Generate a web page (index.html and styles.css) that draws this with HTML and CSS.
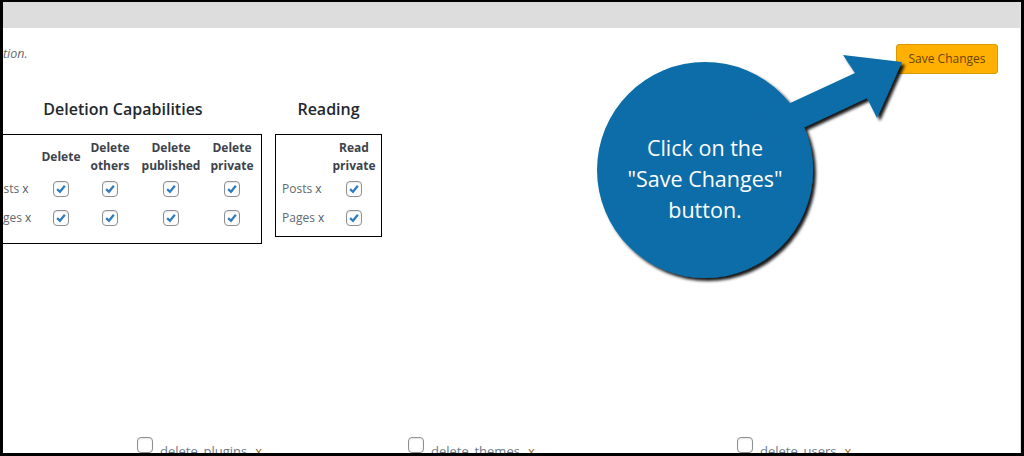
FILE: index.html
```html
<!DOCTYPE html>
<html>
<head>
<meta charset="utf-8">
<link rel="stylesheet" href="styles.css">
</head>
<body>
<div class="frame">
  <div class="inner">
    <div class="topbar"></div>
    <div class="head">
      <p class="desc">tion.</p>
      <button class="save">Save Changes</button>
    </div>
    <div class="groups">
      <section class="group group-del">
        <h2>Deletion Capabilities</h2>
        <div class="box box-del">
          <div class="hdr"></div>
          <div class="hdr">Delete</div>
          <div class="hdr">Delete<br>others</div>
          <div class="hdr">Delete<br>published</div>
          <div class="hdr">Delete<br>private</div>

          <div class="lbl">Posts <span class="x">x</span></div>
          <div class="cell"><span class="cb on"><svg viewBox="0 0 16 16"><polyline points="3.6,8.2 6.8,11.2 12.4,4.2"/></svg></span></div>
          <div class="cell"><span class="cb on"><svg viewBox="0 0 16 16"><polyline points="3.6,8.2 6.8,11.2 12.4,4.2"/></svg></span></div>
          <div class="cell"><span class="cb on"><svg viewBox="0 0 16 16"><polyline points="3.6,8.2 6.8,11.2 12.4,4.2"/></svg></span></div>
          <div class="cell"><span class="cb on"><svg viewBox="0 0 16 16"><polyline points="3.6,8.2 6.8,11.2 12.4,4.2"/></svg></span></div>

          <div class="lbl">Pages <span class="x">x</span></div>
          <div class="cell"><span class="cb on"><svg viewBox="0 0 16 16"><polyline points="3.6,8.2 6.8,11.2 12.4,4.2"/></svg></span></div>
          <div class="cell"><span class="cb on"><svg viewBox="0 0 16 16"><polyline points="3.6,8.2 6.8,11.2 12.4,4.2"/></svg></span></div>
          <div class="cell"><span class="cb on"><svg viewBox="0 0 16 16"><polyline points="3.6,8.2 6.8,11.2 12.4,4.2"/></svg></span></div>
          <div class="cell"><span class="cb on"><svg viewBox="0 0 16 16"><polyline points="3.6,8.2 6.8,11.2 12.4,4.2"/></svg></span></div>
        </div>
      </section>
      <section class="group group-read">
        <h2>Reading</h2>
        <div class="box box-read">
          <div class="hdr"></div>
          <div class="hdr">Read<br>private</div>
          <div class="lbl">Posts <span class="x">x</span></div>
          <div class="cell"><span class="cb on"><svg viewBox="0 0 16 16"><polyline points="3.6,8.2 6.8,11.2 12.4,4.2"/></svg></span></div>
          <div class="lbl">Pages <span class="x">x</span></div>
          <div class="cell"><span class="cb on"><svg viewBox="0 0 16 16"><polyline points="3.6,8.2 6.8,11.2 12.4,4.2"/></svg></span></div>
        </div>
      </section>
    </div>
    <div class="bottom">
      <label class="opt"><span class="cb"></span><span class="cap">delete_plugins</span><span class="xo">x</span></label>
      <label class="opt"><span class="cb"></span><span class="cap">delete_themes</span><span class="xo">x</span></label>
      <label class="opt"><span class="cb"></span><span class="cap">delete_users</span><span class="xo">x</span></label>
    </div>
  </div>

  <svg class="callout" width="330" height="260" viewBox="0 0 330 260">
    <defs>
      <filter id="sh" x="-20%" y="-20%" width="140%" height="140%">
        <feDropShadow dx="3" dy="3" stdDeviation="1.6" flood-color="#000" flood-opacity="0.9"/>
      </filter>
    </defs>
    <g filter="url(#sh)" fill="#086da9">
      <circle cx="115" cy="130" r="108"/>
      <polygon points="170,77 265,33 253,15 312,22 287,78 277,58 183,102"/>
    </g>
  </svg>
  <div class="callout-text">Click on the<br>"Save Changes"<br>button.</div>
</div>
</body>
</html>
```

FILE: styles.css
```css
* { box-sizing: border-box; }
html, body { margin: 0; padding: 0; background: #fff; }
body { font-family: "Open Sans", "Noto Sans", sans-serif; color: #3c434a; }

.frame {
  position: relative;
  width: 1024px;
  height: 456px;
  border: solid #000;
  border-width: 2px 3px 3px 3px;
  overflow: hidden;
  background: #fff;
}
.inner {
  height: 100%;
  border-right: 1px solid #e3e3e3;
  display: flex;
  flex-direction: column;
  overflow: hidden;
}
.topbar { height: 26px; background: #dddddd; flex-shrink: 0; }

.head {
  display: flex;
  justify-content: space-between;
  align-items: flex-start;
  padding: 16px 22px 0 0;
  flex-shrink: 0;
}
.desc {
  margin: 1px 0 0;
  font-size: 12.5px;
  line-height: 17px;
  font-style: italic;
  color: #646970;
}
.save {
  height: 30px;
  width: 102px;
  padding: 0;
  border: 1px solid #d99a00;
  border-radius: 3px;
  background: #ffb000;
  color: #6b4200;
  font-family: "Open Sans", sans-serif;
  font-size: 12px;
  line-height: 28px;
}

.groups {
  display: flex;
  align-items: flex-start;
  gap: 13px;
  margin-top: 24px;
  flex-shrink: 0;
}
.group { display: flex; flex-direction: column; align-items: center; }
.group-del { margin-left: -19px; }
.group h2 {
  margin: 0 0 14px;
  font-size: 16px;
  line-height: 22px;
  font-weight: 600;
  color: #23282d;
}

.box {
  border: 1px solid #000;
  display: grid;
  padding: 0 4px;
}
.box-del {
  grid-template-columns: 48px 48px 50px 72px 50px;
  grid-template-rows: 39px 29px 30px;
  padding-bottom: 10px;
  width: 278px;
}
.box-read {
  grid-template-columns: 48px 48px;
  grid-template-rows: 39px 29px 30px;
  padding: 0 3px 3px 6px;
  width: 107px;
}
.hdr {
  padding-top: 4px;
  font-size: 12px;
  line-height: 18px;
  font-weight: 700;
  text-align: center;
  color: #3c434a;
  align-self: start;
}
.box-del .hdr:nth-child(2) { padding-top: 13px; }
.lbl {
  font-size: 12px;
  line-height: 18px;
  color: #646970;
  align-self: center;
  white-space: nowrap;
}
.lbl .x { color: #50575e; }
.cell { display: flex; justify-content: center; align-items: center; }

.cb {
  display: inline-block;
  width: 16px;
  height: 16px;
  border: 1px solid #8c8f94;
  border-radius: 4px;
  background: #fff;
  box-shadow: inset 0 1px 2px rgba(0,0,0,0.1);
  flex-shrink: 0;
}
.cb svg { display: block; width: 14px; height: 14px; }
.cb polyline { fill: none; stroke: #2f7dbe; stroke-width: 2.6; }

.bottom {
  display: grid;
  grid-template-columns: 271px 329px auto;
  margin-top: 193px;
  padding-left: 134px;
  flex-shrink: 0;
}
.opt { display: flex; align-items: flex-start; font-size: 13px; line-height: 20px; color: #50575e; }
.opt .cb { margin-right: 7px; }
.opt .cap { color: #6d7a88; margin-top: 4px; }
.opt .xo { color: #a0661c; margin-left: 8px; margin-top: 4px; }

.callout {
  position: absolute;
  left: 587px;
  top: 38px;
  overflow: visible;
}
.callout-text {
  position: absolute;
  left: 594px;
  top: 130px;
  width: 216px;
  text-align: center;
  color: #fff;
  font-family: "Open Sans", sans-serif;
  font-size: 21.5px;
  line-height: 31px;
}
```
